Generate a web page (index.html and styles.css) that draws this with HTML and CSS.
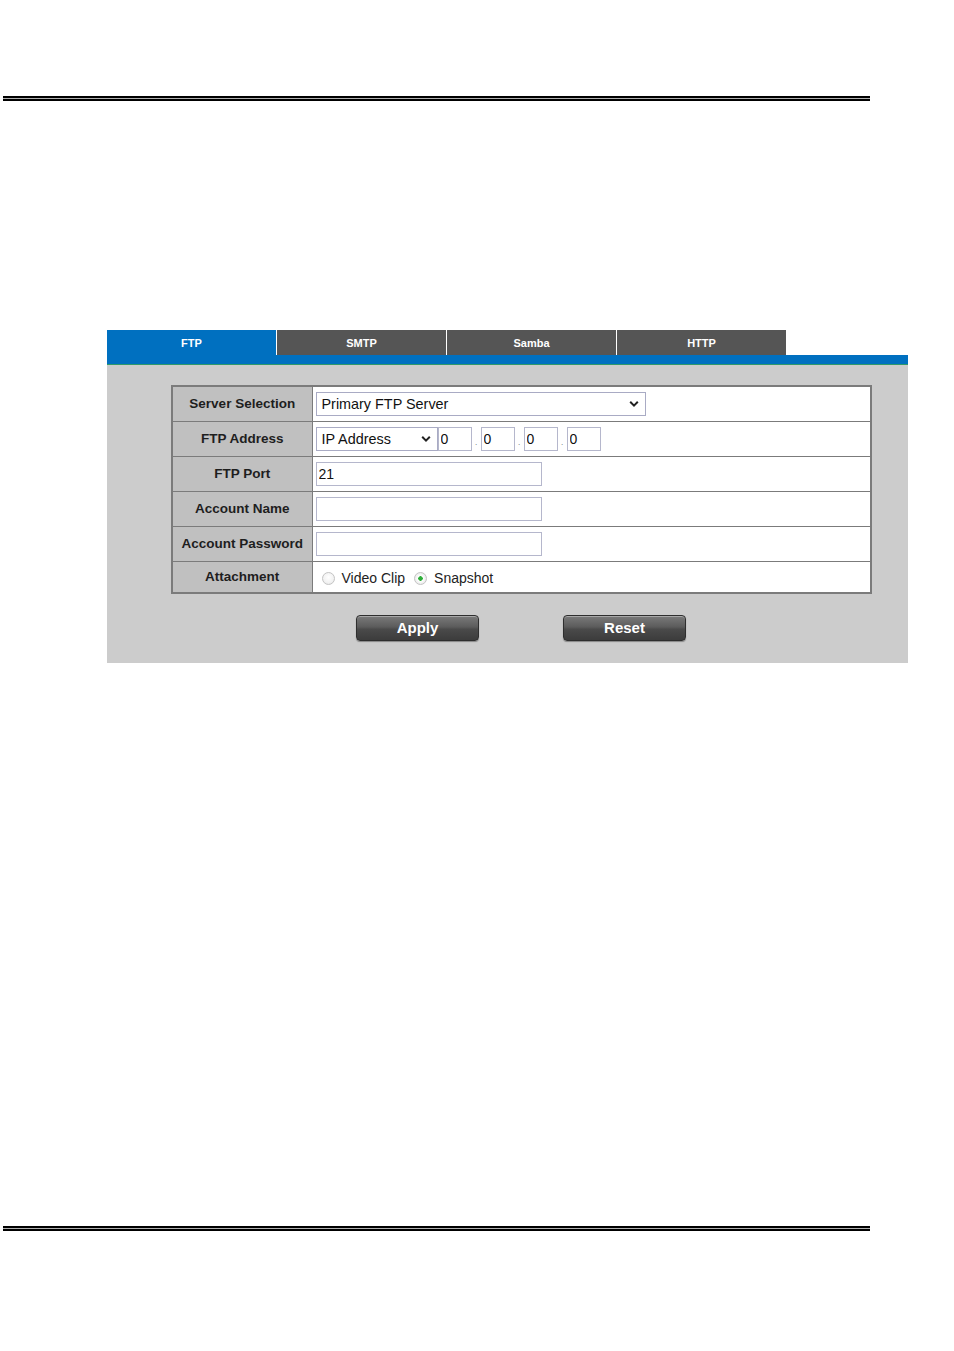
FILE: index.html
```html
<!DOCTYPE html>
<html>
<head>
<meta charset="utf-8">
<title>FTP Settings</title>
<link rel="stylesheet" href="styles.css">
</head>
<body>
<div class="page">
  <div class="rule rule-top"></div>

  <div class="panel-wrap">
    <div class="tabs">
      <div class="tab active">FTP</div>
      <div class="tab">SMTP</div>
      <div class="tab">Samba</div>
      <div class="tab">HTTP</div>
    </div>
    <div class="tab-bar"></div>
    <div class="panel">
      <table class="form">
        <colgroup><col class="c-label"><col class="c-value"></colgroup>
        <tr>
          <th>Server Selection</th>
          <td>
            <div class="sel sel-wide">
              <select><option>Primary FTP Server</option></select>
              <svg class="chev" viewBox="0 0 10 8" width="10" height="8"><path d="M1.2 1.8 L5 5.6 L8.8 1.8" fill="none" stroke="#222" stroke-width="2"/></svg>
            </div>
          </td>
        </tr>
        <tr>
          <th>FTP Address</th>
          <td>
            <div class="ip-row">
              <div class="sel sel-ip">
                <select><option>IP Address</option></select>
                <svg class="chev" viewBox="0 0 10 8" width="10" height="8"><path d="M1.2 1.8 L5 5.6 L8.8 1.8" fill="none" stroke="#222" stroke-width="2"/></svg>
              </div>
              <input class="ip" type="text" value="0">
              <span class="dot">.</span>
              <input class="ip" type="text" value="0">
              <span class="dot">.</span>
              <input class="ip" type="text" value="0">
              <span class="dot">.</span>
              <input class="ip" type="text" value="0">
            </div>
          </td>
        </tr>
        <tr>
          <th>FTP Port</th>
          <td><input class="txt" type="text" value="21"></td>
        </tr>
        <tr>
          <th>Account Name</th>
          <td><input class="txt" type="text" value=""></td>
        </tr>
        <tr>
          <th>Account Password</th>
          <td><input class="txt" type="password" value=""></td>
        </tr>
        <tr class="last">
          <th>Attachment</th>
          <td>
            <div class="radios">
              <label class="radio"><input type="radio" name="att"><span>Video Clip</span></label>
              <label class="radio"><input type="radio" name="att" checked><span>Snapshot</span></label>
            </div>
          </td>
        </tr>
      </table>
      <div class="buttons">
        <button class="btn">Apply</button>
        <button class="btn">Reset</button>
      </div>
    </div>
  </div>

  <div class="rule rule-bottom"></div>
</div>
</body>
</html>
```

FILE: styles.css
```css
html, body {
  margin: 0;
  padding: 0;
  background: #ffffff;
}

body {
  font-family: "Liberation Sans", Arial, sans-serif;
  color: #222;
}

.page {
  width: 954px;
  height: 1351px;
  display: flex;
  flex-direction: column;
}

.rule {
  margin-left: 3px;
  width: 867px;
  height: 5px;
  box-sizing: border-box;
  border-top: 2px solid #000;
  border-bottom: 2px solid #000;
  background: #b0b0b0;
}

.rule-top {
  margin-top: 96px;
}

.rule-bottom {
  margin-top: 563px;
}

.panel-wrap {
  margin-top: 229px;
  margin-left: 107px;
  width: 801px;
}

.tabs {
  display: flex;
  gap: 1px;
  height: 25px;
}

.tab {
  width: 169px;
  height: 25px;
  background: #555555;
  color: #ffffff;
  font-size: 11px;
  font-weight: bold;
  text-align: center;
  line-height: 26px;
}

.tab.active {
  background: #0070c0;
}

.tab-bar {
  height: 10px;
  background: #0070c0;
  border-bottom: 1px solid #2f9a6a;
  box-sizing: border-box;
}

.panel {
  background: #cccccc;
  padding: 20px 36px 22px 64px;
}

.form {
  width: 701px;
  border-collapse: collapse;
  table-layout: fixed;
  border: 2px solid #7b7b7b;
}

.c-label {
  width: 140px;
}

.form th,
.form td {
  border: 1px solid #7b7b7b;
  height: 35px;
  padding: 0;
  box-sizing: border-box;
}

.form tr.last th,
.form tr.last td {
  height: 32px;
}

.form th {
  background: #c0c0c0;
  font-size: 13.5px;
  font-weight: bold;
  color: #1e1e1e;
  text-align: center;
}

.form td {
  background: #ffffff;
  padding-left: 3px;
  font-size: 14px;
}

.sel {
  position: relative;
  display: inline-block;
  vertical-align: middle;
}

.sel select {
  appearance: none;
  -webkit-appearance: none;
  display: block;
  height: 24px;
  box-sizing: border-box;
  border: 1px solid #a9abc4;
  border-radius: 0;
  background: #ffffff;
  font-family: "Liberation Sans", Arial, sans-serif;
  font-size: 14.4px;
  color: #111;
  padding: 0 0 0 5px;
  margin: 0;
}

.sel-wide select {
  width: 330px;
}

.sel-ip select {
  width: 122px;
}

.chev {
  position: absolute;
  right: 7px;
  top: 8px;
  pointer-events: none;
}

.ip-row {
  display: flex;
  align-items: center;
}

.ip {
  width: 34px;
  height: 24px;
  box-sizing: border-box;
  border: 1px solid #b5b7cc;
  padding: 0 0 0 2px;
  margin: 0;
  font-family: "Liberation Sans", Arial, sans-serif;
  font-size: 14px;
  color: #111;
}

.dot {
  width: 9px;
  font-size: 8px;
  line-height: 1;
  align-self: flex-end;
  margin-bottom: 4px;
  text-align: center;
  color: #555;
}

.txt {
  display: block;
  width: 226px;
  height: 24px;
  box-sizing: border-box;
  border: 1px solid #b5b7cc;
  padding: 0 0 0 2px;
  margin: 0;
  font-family: "Liberation Sans", Arial, sans-serif;
  font-size: 14px;
  color: #111;
}

.radios {
  display: flex;
  align-items: center;
  padding-left: 6px;
  padding-top: 3px;
}

.radio {
  display: flex;
  align-items: center;
  font-size: 14px;
  color: #222;
  margin-right: 9px;
}

.radio input {
  appearance: none;
  -webkit-appearance: none;
  width: 13px;
  height: 13px;
  margin: 0 7px 0 0;
  border-radius: 50%;
  border: 1px solid #c4c4c4;
  background: radial-gradient(circle at 50% 40%, #ffffff 0%, #f2f2f2 60%, #e0e0e0 100%);
  box-sizing: border-box;
}

.radio input:checked {
  background: radial-gradient(circle, #2fae3a 0, #2fae3a 2px, #ffffff 2.5px, #f1f1f1 60%, #e0e0e0 100%);
}

.buttons {
  display: flex;
  gap: 84px;
  margin-top: 21px;
  padding-left: 185px;
}

.btn {
  width: 123px;
  height: 26px;
  border: 1px solid #2e2e2e;
  border-radius: 4px;
  background: linear-gradient(to bottom, #7a7a7a 0%, #5c5c5c 45%, #4a4a4a 55%, #3c3c3c 100%);
  box-shadow: inset 0 1px 0 rgba(255,255,255,0.35), 0 1px 1px rgba(0,0,0,0.35);
  color: #ffffff;
  font-family: "Liberation Sans", Arial, sans-serif;
  font-size: 15px;
  font-weight: bold;
  padding: 0;
  line-height: 24px;
}
```
